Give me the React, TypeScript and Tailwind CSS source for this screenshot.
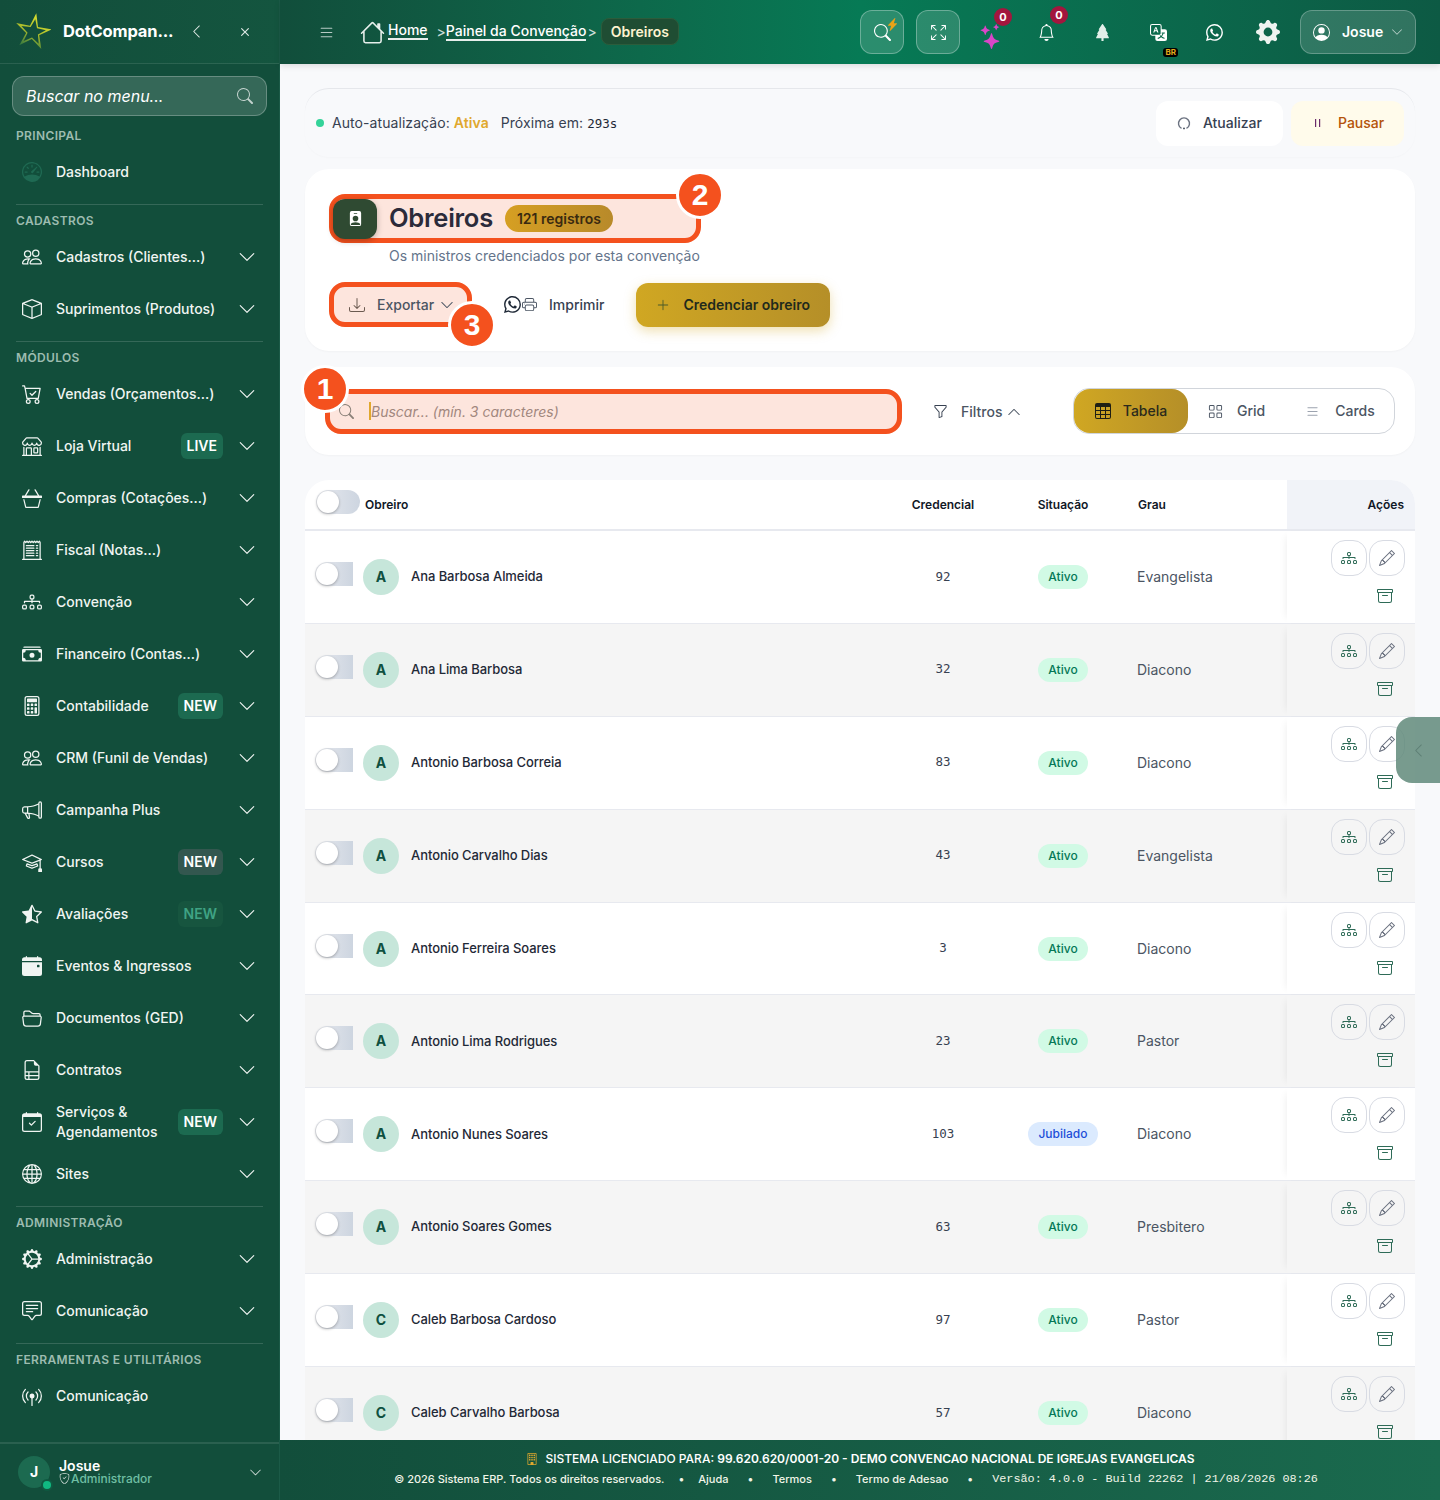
// Tela: Obreiros (Painel da Convenção)
import type { ReactNode } from 'react';
import {
  BsArchive, BsArrowsFullscreen, BsBasket3, BsBell, BsBroadcastPin, BsBuilding, BsCalculator,
  BsCalendarCheck, BsCalendarEventFill, BsCashStack, BsCartCheck, BsChatSquareText, BsChevronDown,
  BsChevronLeft, BsChevronUp, BsDiagram3, BsDownload, BsFileEarmarkRuled, BsFolder2Open, BsFunnel,
  BsGearWideConnected, BsGearFill, BsGlobe, BsGrid, BsHouse, BsLightningChargeFill, BsList, BsMegaphone,
  BsMortarboard, BsPencil, BsPeople, BsPersonBadgeFill, BsPersonCircle, BsPlusLg, BsPrinter,
  BsReceiptCutoff, BsSearch, BsShieldCheck, BsShop, BsSpeedometer, BsStarHalf, BsStars, BsTable,
  BsTranslate, BsTreeFill, BsWhatsapp, BsX, BsBox,
} from 'react-icons/bs';

interface MenuItem {
  label: ReactNode;
  icon: ReactNode;
  badge?: { text: string; className: string };
  noChevron?: boolean;
}

const badgeGreen = 'bg-[#1c6a50] text-white';

const modulos: MenuItem[] = [
  { label: 'Vendas (Orçamentos...)', icon: <BsCartCheck /> },
  { label: 'Loja Virtual', icon: <BsShop />, badge: { text: 'LIVE', className: badgeGreen } },
  { label: 'Compras (Cotações...)', icon: <BsBasket3 /> },
  { label: 'Fiscal (Notas...)', icon: <BsReceiptCutoff /> },
  { label: 'Convenção', icon: <BsDiagram3 /> },
  { label: 'Financeiro (Contas...)', icon: <BsCashStack /> },
  { label: 'Contabilidade', icon: <BsCalculator />, badge: { text: 'NEW', className: badgeGreen } },
  { label: 'CRM (Funil de Vendas)', icon: <BsPeople /> },
  { label: 'Campanha Plus', icon: <BsMegaphone /> },
  { label: 'Cursos', icon: <BsMortarboard />, badge: { text: 'NEW', className: 'bg-[#33574f] text-white' } },
  { label: 'Avaliações', icon: <BsStarHalf />, badge: { text: 'NEW', className: 'bg-[#17553f] text-[#3fa384]' } },
  { label: 'Eventos & Ingressos', icon: <BsCalendarEventFill /> },
  { label: 'Documentos (GED)', icon: <BsFolder2Open /> },
  { label: 'Contratos', icon: <BsFileEarmarkRuled /> },
  { label: <>Serviços &<br />Agendamentos</>, icon: <BsCalendarCheck />, badge: { text: 'NEW', className: badgeGreen } },
  { label: 'Sites', icon: <BsGlobe /> },
];

const obreiros = [
  { nome: 'Ana Barbosa Almeida', cred: '92', sit: 'Ativo', grau: 'Evangelista' },
  { nome: 'Ana Lima Barbosa', cred: '32', sit: 'Ativo', grau: 'Diacono' },
  { nome: 'Antonio Barbosa Correia', cred: '83', sit: 'Ativo', grau: 'Diacono' },
  { nome: 'Antonio Carvalho Dias', cred: '43', sit: 'Ativo', grau: 'Evangelista' },
  { nome: 'Antonio Ferreira Soares', cred: '3', sit: 'Ativo', grau: 'Diacono' },
  { nome: 'Antonio Lima Rodrigues', cred: '23', sit: 'Ativo', grau: 'Pastor' },
  { nome: 'Antonio Nunes Soares', cred: '103', sit: 'Jubilado', grau: 'Diacono' },
  { nome: 'Antonio Soares Gomes', cred: '63', sit: 'Ativo', grau: 'Presbitero' },
  { nome: 'Caleb Barbosa Cardoso', cred: '97', sit: 'Ativo', grau: 'Pastor' },
  { nome: 'Caleb Carvalho Barbosa', cred: '57', sit: 'Ativo', grau: 'Diacono' },
];

function starPoints(r1: number, r2: number) {
  const pts: string[] = [];
  for (let i = 0; i < 10; i++) {
    const a = ((-80 + i * 36) * Math.PI) / 180;
    const r = i % 2 === 0 ? r1 : r2;
    pts.push(`${(18 + r * Math.cos(a)).toFixed(1)},${(19 + r * Math.sin(a)).toFixed(1)}`);
  }
  return pts.join(' ');
}

function Logo() {
  return (
    <svg width="36" height="38" viewBox="0 0 36 38" className="shrink-0">
      <defs>
        <linearGradient id="logoGrad" x1="0.7" y1="0" x2="0.2" y2="1">
          <stop offset="0" stopColor="#e3e62f" />
          <stop offset="0.55" stopColor="#a6b92c" />
          <stop offset="1" stopColor="#1f6b42" />
        </linearGradient>
      </defs>
      <polygon points={starPoints(19, 7)} fill="url(#logoGrad)" />
      <polygon points={starPoints(13, 5.5)} fill="#124e3b" />
    </svg>
  );
}

function SideItem({ item }: { item: MenuItem }) {
  return (
    <div className="h-[52px] flex items-center pl-[22px] pr-[23px] text-[#f0f5f2]">
      <span className="w-5 shrink-0 text-[20px] flex justify-center">{item.icon}</span>
      <span className="ml-[14px] flex-1 text-sm font-medium leading-5">{item.label}</span>
      {item.badge && (
        <span className={`h-[26px] px-[6px] mr-[15px] rounded-md text-sm font-semibold flex items-center ${item.badge.className}`}>
          {item.badge.text}
        </span>
      )}
      {!item.noChevron && <BsChevronDown className="text-[18px] shrink-0" />}
    </div>
  );
}

function SideSection({ title, children, divider = true }: { title: string; children: ReactNode; divider?: boolean }) {
  return (
    <div>
      {divider && <div className="mx-4 mt-[6px] mb-[7px] border-t border-white/15" />}
      <div className="h-4 mb-[3px] px-4 text-xs leading-[18px] font-semibold tracking-[0.03em] text-[#9dbcb0]">{title}</div>
      {children}
    </div>
  );
}

function Sidebar() {
  return (
    <aside className="w-[280px] shrink-0 h-full bg-[#124e3b] flex flex-col border-r border-[#1b5a47] z-10">
      <div className="h-16 shrink-0 flex items-center pl-[15px] pr-[25px] border-b border-white/10 bg-gradient-to-r from-[#124e3b] to-[#14553f]">
        <Logo />
        <span className="ml-3 w-[113px] whitespace-nowrap text-[16.5px] font-bold text-white tracking-[-0.01em]">DotCompan...</span>
        <BsChevronLeft className="ml-[13px] text-[15px] text-[#dfe9e5]" />
        <BsX className="ml-auto text-[18px] text-[#dfe9e5]" />
      </div>
      <div className="mx-3 mt-3 h-10 shrink-0 rounded-xl border border-white/25 bg-white/15 flex items-center justify-between px-[13px] mb-[11px]">
        <span className="italic text-base text-white">Buscar no menu...</span>
        <BsSearch className="text-[16px] text-white/70" />
      </div>
      <SideSection title="PRINCIPAL" divider={false}>
        <SideItem item={{ label: 'Dashboard', icon: <BsSpeedometer className="text-[#1f6a53]" />, noChevron: true }} />
      </SideSection>
      <SideSection title="CADASTROS">
        <SideItem item={{ label: 'Cadastros (Clientes...)', icon: <BsPeople /> }} />
        <SideItem item={{ label: 'Suprimentos (Produtos)', icon: <BsBox /> }} />
      </SideSection>
      <SideSection title="MÓDULOS">
        {modulos.map((m, i) => (
          <SideItem key={i} item={m} />
        ))}
      </SideSection>
      <SideSection title="ADMINISTRAÇÃO">
        <SideItem item={{ label: 'Administração', icon: <BsGearWideConnected /> }} />
        <SideItem item={{ label: 'Comunicação', icon: <BsChatSquareText /> }} />
      </SideSection>
      <SideSection title="FERRAMENTAS E UTILITÁRIOS">
        <SideItem item={{ label: 'Comunicação', icon: <BsBroadcastPin />, noChevron: true }} />
      </SideSection>
      <div className="mt-auto h-[58px] border-t-2 border-white/10 flex items-center pl-[18px] pr-[17px]">
        <div className="relative w-[32px] h-[32px] rounded-full bg-[#1c6a50] flex items-center justify-center text-sm font-bold text-white">
          J
          <span className="absolute -right-px -bottom-px w-2 h-2 rounded-full bg-[#10b981] ring-2 ring-[#0f5a41]" />
        </div>
        <div className="ml-[9px] flex-1">
          <div className="text-sm font-semibold text-white leading-[13px]">Josue</div>
          <div className="flex items-center gap-px text-xs font-medium text-[#6fbfa3] leading-[14px]">
            <BsShieldCheck className="text-[11px] text-white/80" />
            Administrador
          </div>
        </div>
        <BsChevronDown className="text-[13px] text-white/80" />
      </div>
    </aside>
  );
}

function TopIcon({ children, badge, sub }: { children: ReactNode; badge?: string; sub?: string }) {
  return (
    <div className="relative w-14 h-11 flex items-center justify-center text-white">
      {children}
      {badge && (
        <span className={`absolute right-[6px] w-[18px] h-[18px] rounded-full bg-[#a3163e] text-[11px] font-bold flex items-center justify-center ${badge}`}>
          0
        </span>
      )}
      {sub && (
        <span className="absolute bottom-[-3px] right-[8px] px-[2px] rounded-[3px] bg-black text-[#e2a91c] text-[8px] leading-[9px] font-bold">
          {sub}
        </span>
      )}
    </div>
  );
}

function Topbar() {
  return (
    <header className="h-16 shrink-0 flex items-center justify-between pl-[38px] pr-6 bg-gradient-to-r from-[#114e3b] via-[#067a55] to-[#0d5a44] shadow-[0_2px_6px_rgba(0,0,0,0.12)] z-10">
      <div className="flex items-center text-white">
        <BsList className="text-[17px] text-white/70" />
        <BsHouse className="ml-[25px] text-[25px] text-[#e6efeb]" />
        <span className="ml-[3px] text-sm font-medium border-b-2 border-white/90 leading-[17px] -mt-[3px]">Home</span>
        <span className="ml-[9px] text-sm text-white/80">&gt;</span>
        <span className="text-sm font-medium border-b-2 border-white/90 leading-[17px] -mt-px">Painel da Convenção</span>
        <span className="ml-px text-sm text-white/80">&gt;</span>
        <span className="ml-[4px] -mt-px h-[27px] px-[9px] flex items-center rounded-lg bg-[#1f4d33] border border-[#2c5c3b] text-sm font-semibold text-[#fdf3cf]">
          Obreiros
        </span>
      </div>
      <div className="flex items-center">
        <div className="relative w-11 h-11 rounded-xl border border-white/30 bg-white/15 flex items-center justify-center text-white">
          <BsSearch className="text-[17px]" />
          <BsLightningChargeFill className="absolute top-[7px] right-[4px] text-[13px] text-[#e8a317]" />
        </div>
        <div className="ml-3 mr-[2px] w-11 h-11 rounded-xl border border-white/30 bg-white/15 flex items-center justify-center text-white">
          <BsArrowsFullscreen className="text-[15px]" />
        </div>
        <TopIcon badge="top-[-2px]"><BsStars className="text-[25px] text-[#d946c7] mt-2 ml-[3px]" /></TopIcon>
        <TopIcon badge="top-[-4px]"><BsBell className="text-[17px]" /></TopIcon>
        <TopIcon><BsTreeFill className="text-[17px] text-[#e3efe9]" /></TopIcon>
        <TopIcon sub="BR"><BsTranslate className="text-[17px]" /></TopIcon>
        <TopIcon><BsWhatsapp className="text-[17px]" /></TopIcon>
        <TopIcon><BsGearFill className="text-[24px] text-[#eef3f0] -ml-[4px]" /></TopIcon>
        <div className="ml-[2px] w-[116px] h-11 rounded-xl border border-white/25 bg-white/15 flex items-center pl-[12px] text-white">
          <BsPersonCircle className="text-[17px]" />
          <span className="ml-[12px] text-sm font-semibold">Josue</span>
          <BsChevronDown className="ml-[8px] text-[12px] text-white/70" />
        </div>
      </div>
    </header>
  );
}

function Callout({ n, className }: { n: string; className: string }) {
  return (
    <span className={`absolute z-20 w-[48px] h-[48px] rounded-full bg-[#f4511e] border-[3px] border-white text-white text-[30px] leading-none font-bold flex items-center justify-center font-['Liberation_Sans',sans-serif] ${className}`}>
      {n}
    </span>
  );
}

function Toggle({ header }: { header?: boolean }) {
  return (
    <span className={`relative shrink-0 block h-6 bg-gradient-to-r from-[#e8eaef] to-[#cdd5e0] ${header ? 'w-11 rounded-full' : 'w-[38px] rounded-l-full'}`}>
      <span className="absolute left-[1px] top-px w-[22px] h-[22px] rounded-full bg-white shadow-[0_1px_3px_rgba(0,0,0,0.3)]" />
    </span>
  );
}

function Row({ o, even }: { o: (typeof obreiros)[number]; even: boolean }) {
  const bg = even ? 'bg-[#f5f5f5]' : 'bg-white';
  return (
    <div className={`grid grid-cols-[585px_106px_134px_157px_128px] h-[92.9px] border-b border-[#e7e9ef] ${bg}`}>
      <div className="flex items-center pl-[10px]">
        <span className="-mt-[6px]"><Toggle /></span>
        <span className="ml-[10px] w-9 h-9 rounded-full bg-[#c6e6da] text-[#0f5040] text-sm font-bold flex items-center justify-center">
          {o.nome[0]}
        </span>
        <span className="ml-3 text-[13px] font-medium tracking-[-0.005em] text-[#1f2937]">{o.nome}</span>
      </div>
      <div className="flex items-center justify-center font-['DejaVu_Sans_Mono',monospace] text-[12.5px] text-[#374151]">{o.cred}</div>
      <div className="flex items-center justify-center">
        <span className={`h-6 px-[10px] rounded-full text-xs font-medium flex items-center ${o.sit === 'Ativo' ? 'bg-[#d1fae5] text-[#047857]' : 'bg-[#dbeafe] text-[#1d4ed8]'}`}>
          {o.sit}
        </span>
      </div>
      <div className="flex items-center pl-[7px] text-sm text-[#4b5563]">{o.grau}</div>
      <div className={`pt-[9px] pr-[10px] shadow-[-6px_0_8px_-6px_rgba(0,0,0,0.08)] ${bg}`}>
        <div className="ml-auto w-[74px] flex flex-wrap justify-end gap-x-[2px]">
          <span className="w-9 h-9 rounded-[14px] border border-[#d8dbe3] flex items-center justify-center text-[#2e6b57]">
            <BsDiagram3 className="text-[16px]" />
          </span>
          <span className="w-9 h-9 rounded-[14px] border border-[#d8dbe3] flex items-center justify-center text-[#6b7280]">
            <BsPencil className="text-[16px]" />
          </span>
          <span className="w-9 h-[34px] mt-[3px] mr-[2px] flex items-center justify-center text-[#2e6b57]">
            <BsArchive className="text-[16px]" />
          </span>
        </div>
      </div>
    </div>
  );
}

function Content() {
  return (
    <main className="relative flex-1 min-h-0 overflow-hidden bg-[#f8f9fb] px-[25px] pt-6">
      {/* Auto-atualização */}
      <section className="h-[69px] rounded-3xl border-t border-[#e5e7eb] flex items-center px-[11px] shadow-[0_1px_2px_rgba(0,0,0,0.02)]">
        <span className="w-2 h-2 rounded-full bg-[#34d399]" />
        <span className="ml-2 text-sm tracking-[0.005em] text-[#374151]">Auto-atualização: <span className="font-semibold text-[#e0a82e]">Ativa</span></span>
        <span className="ml-3 text-sm tracking-[0.005em] text-[#374151]">Próxima em: <span className="font-['DejaVu_Sans_Mono',monospace] text-[12.5px] tracking-normal text-[#1f2937]">293s</span></span>
        <div className="ml-auto flex items-center gap-2">
          <span className="w-[127px] h-[45px] rounded-xl bg-white flex items-center justify-center gap-3 text-sm font-medium text-[#374151]">
            <svg width="14" height="14" viewBox="0 0 14 14" fill="none" stroke="#6b7280" strokeWidth="1.4"><path d="M4.5 12.3A5.5 5.5 0 1 1 9.5 12.3" /><circle cx="7" cy="12.4" r="0.9" fill="#374151" stroke="none" /></svg>
            Atualizar
          </span>
          <span className="w-[113px] h-[45px] rounded-xl bg-[#fffbeb] flex items-center pl-[22px] gap-[15px] text-sm font-medium text-[#b45309]">
            <svg width="10" height="10" viewBox="0 0 10 10" fill="#6b2c6b"><rect x="2" y="1" width="1.2" height="8" /><rect x="6" y="1" width="1.2" height="8" /></svg>
            Pausar
          </span>
        </div>
      </section>

      {/* Título e ações */}
      <section className="mt-3 h-[182px] rounded-3xl bg-white pl-6 pt-[25px] shadow-[0_1px_2px_rgba(0,0,0,0.03)]">
        <div className="relative w-[372px] h-[49px] rounded-2xl border-[5px] border-[#f4511e] bg-[#fde5dd] flex items-center">
          <span className="w-11 h-[40px] -ml-px rounded-xl bg-[#2f4a32] flex items-center justify-center text-white shadow-[0_2px_6px_rgba(0,0,0,0.25)]">
            <BsPersonBadgeFill className="text-[15px]" />
          </span>
          <span className="ml-3 text-[25.5px] font-semibold text-[#2b2b3a] tracking-[-0.01em]">Obreiros</span>
          <span className="ml-3 h-[27px] px-3 rounded-full bg-gradient-to-r from-[#d69f22] to-[#b88a2a] text-[14px] font-semibold text-[#3a2a10] flex items-center">
            121 registros
          </span>
          <Callout n="2" className="-right-[28px] -top-[28px]" />
        </div>
        <p className="ml-[60px] mt-[3px] h-5 text-sm text-[#64748b] leading-5">Os ministros credenciados por esta convenção</p>
        <div className="mt-[16px] flex items-center">
          <div className="relative w-[143px] h-[45px] rounded-2xl border-[5px] border-[#f4511e] bg-[#fde5dd] flex items-center pl-[15px] text-sm font-medium text-[#4b5563]">
            <BsDownload className="text-[16px] text-[#6b5a50]" />
            <span className="ml-3">Exportar</span>
            <BsChevronDown className="ml-[6px] text-[14px]" />
            <Callout n="3" className="-right-[29px] -bottom-[27px]" />
          </div>
          <div className="ml-[32px] flex items-center text-[#374151]">
            <BsWhatsapp className="text-[17px] text-[#1f2937]" />
            <BsPrinter className="ml-px text-[15px] text-[#4b5563]" />
            <span className="ml-[12px] text-sm font-medium">Imprimir</span>
          </div>
          <div className="ml-[32px] w-[194px] h-11 rounded-xl bg-gradient-to-r from-[#d0a722] to-[#b58f28] shadow-[0_4px_12px_rgba(208,167,34,0.35)] flex items-center pl-[20px] text-sm font-semibold text-[#1f2a1c]">
            <BsPlusLg className="text-[14px] text-[#4a5a2a]" />
            <span className="ml-[13px]">Credenciar obreiro</span>
          </div>
        </div>
      </section>

      {/* Busca e modos de visualização */}
      <section className="mt-4 h-[88px] rounded-3xl bg-white px-5 flex items-center shadow-[0_1px_2px_rgba(0,0,0,0.03)]">
        <div className="relative w-[577px] h-[45px] rounded-2xl border-[5px] border-[#f4511e] bg-[#fde5dd] flex items-center pl-[9px]">
          <BsSearch className="text-[15px] text-[#8a8078]" />
          <span className="ml-[15px] w-[2px] h-[18px] bg-[#e0a82e]" />
          <span className="mt-px text-sm italic text-[#a1877e]">Buscar... (mín. 3 caracteres)</span>
          <Callout n="1" className="-left-[29px] -top-[29px]" />
        </div>
        <div className="ml-[31px] mt-px flex items-center text-sm font-medium text-[#4b5563]">
          <BsFunnel className="text-[15px] text-[#374151]" />
          <span className="ml-[13px]">Filtros</span>
          <BsChevronUp className="ml-[5px] text-[14px]" />
        </div>
        <div className="ml-auto w-[322px] h-[46px] rounded-2xl border border-[#d1d5db] flex items-center text-sm font-medium text-[#4b5563]">
          <span className="w-[114px] h-[44px] rounded-2xl bg-gradient-to-r from-[#d0a722] to-[#b58f28] flex items-center justify-center gap-3 text-[#2a2a1c]">
            <BsTable className="text-[16px] text-[#1f1f14]" />
            Tabela
          </span>
          <span className="ml-[20px] flex items-center gap-[14px]">
            <BsGrid className="text-[15px]" />
            Grid
          </span>
          <span className="ml-[40px] flex items-center gap-[15px]">
            <BsList className="text-[15px] text-[#9ca3af]" />
            Cards
          </span>
        </div>
      </section>

      {/* Tabela */}
      <section className="mt-[25px] rounded-t-3xl overflow-hidden bg-white">
        <div className="grid grid-cols-[585px_106px_134px_157px_128px] h-[51px] border-b-2 border-[#e7e9ef] text-xs font-semibold text-[#111827]">
          <div className="flex items-center pl-[11px]">
            <span className="-mt-[6px]"><Toggle header /></span>
            <span className="ml-[5px]">Obreiro</span>
          </div>
          <div className="flex items-center justify-center">Credencial</div>
          <div className="flex items-center justify-center">Situação</div>
          <div className="flex items-center pl-[8px]">Grau</div>
          <div className="flex items-center justify-end pr-[11px] bg-[#f1f3f8]">Ações</div>
        </div>
        {obreiros.map((o, i) => (
          <Row key={o.nome} o={o} even={i % 2 === 1} />
        ))}
      </section>

      {/* Aba lateral */}
      <div className="absolute right-0 top-[653px] w-11 h-[66px] rounded-l-2xl bg-[#60897a]/85 flex items-center justify-center">
        <BsChevronLeft className="text-[15px] text-[#5e7f74]" />
      </div>
    </main>
  );
}

function Footer() {
  return (
    <footer className="h-[60px] shrink-0 bg-gradient-to-r from-[#124e3b] to-[#1a6a4e] flex flex-col items-center pt-[11px] text-white z-10">
      <div className="flex items-center text-xs font-medium leading-4">
        <BsBuilding className="text-[12px] text-[#e0a82e] mr-2" />
        <span>SISTEMA LICENCIADO PARA: <strong className="font-semibold">99.620.620/0001-20 - DEMO CONVENCAO NACIONAL DE IGREJAS EVANGELICAS</strong></span>
      </div>
      <div className="mt-1 pr-2 flex items-center gap-[19px] text-[11px] font-medium leading-4 text-[#f1f5e8]">
        <span>© 2026 Sistema ERP. Todos os direitos reservados.</span>
        <span className="-mx-[5px]">•</span>
        <span>Ajuda</span>
        <span>•</span>
        <span>Termos</span>
        <span>•</span>
        <span>Termo de Adesao</span>
        <span>•</span>
        <span className="font-['Liberation_Mono',monospace] text-[11.8px] font-normal">Versão: 4.0.0 - Build 22262 | 21/08/2026 08:26</span>
      </div>
    </footer>
  );
}

export default function App() {
  return (
    <div className="w-full h-[1500px] overflow-hidden flex font-['Inter',sans-serif] bg-[#f8f9fb]">
      <Sidebar />
      <div className="flex-1 min-w-0 flex flex-col h-full">
        <Topbar />
        <Content />
        <Footer />
      </div>
    </div>
  );
}
